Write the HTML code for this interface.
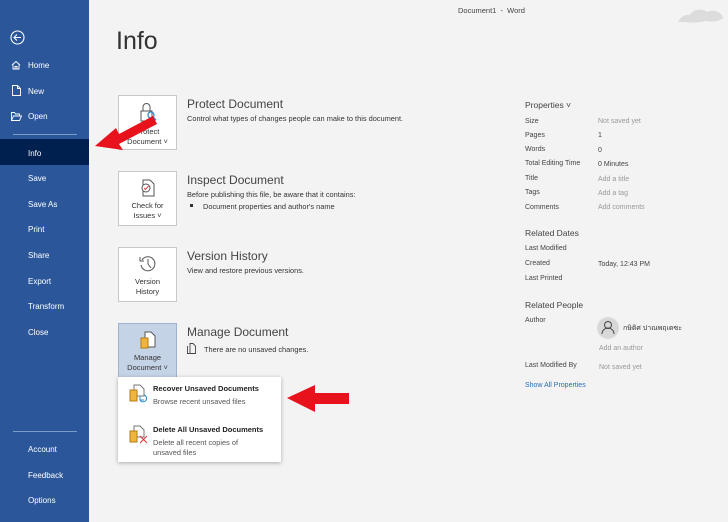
<!DOCTYPE html>
<html><head><meta charset="utf-8"><style>
*{margin:0;padding:0;box-sizing:border-box}
body{width:728px;height:522px;overflow:hidden;background:#f3f3f3;font-family:"Liberation Sans","Noto Sans CJK SC",sans-serif;position:relative;color:#333}
.a{position:absolute;white-space:nowrap}
#side{position:absolute;left:0;top:0;width:89px;height:522px;background:#2b579a;color:#fff;font-size:8px}
#side .a{color:#fff}
.btn{position:absolute;left:118px;width:59px;height:55px;background:#fff;border:1px solid #c8c8c8;font-size:7.5px;text-align:center;color:#333;line-height:10px}
.h{font-size:12px;color:#444}
.d{font-size:7.4px;color:#333}
.pl{font-size:7px;color:#444}
.pv{font-size:7px;color:#999}
</style></head><body>
<div id="side">
<svg class="a" style="left:10px;top:30px" width="15" height="15" viewBox="0 0 15 15"><circle cx="7.5" cy="7.5" r="6.5" fill="none" stroke="#fff" stroke-width="1.1"/><path d="M4 7.5h7M7 4.5l-3 3 3 3" fill="none" stroke="#fff" stroke-width="1.1"/></svg>
<svg class="a" style="left:11px;top:60px" width="10" height="10" viewBox="0 0 10 10"><path d="M1 5L5 1.5 9 5M2 4.5V9h6V4.5M4 9V6.5h2V9" fill="none" stroke="#fff" stroke-width=".9"/></svg>
<div class="a" style="left:28px;top:61px">Home</div>
<svg class="a" style="left:12px;top:85px" width="9" height="11" viewBox="0 0 9 11"><path d="M.5.5h5l3 3v7h-8zM5.5.5v3h3" fill="none" stroke="#fff" stroke-width=".9"/></svg>
<div class="a" style="left:28px;top:87px">New</div>
<svg class="a" style="left:11px;top:112px" width="11" height="9" viewBox="0 0 11 9"><path d="M.5 8.5V.5h3l1 1.5h4v2M.5 8.5l2-4.5h8l-2 4.5z" fill="none" stroke="#fff" stroke-width=".9"/></svg>
<div class="a" style="left:28px;top:112px">Open</div>
<div class="a" style="left:13px;top:134px;width:64px;height:1px;background:#7a9cc8"></div>
<div class="a" style="left:0;top:139px;width:89px;height:26px;background:#002050"></div>
<div class="a" style="left:28px;top:149px">Info</div>
<div class="a" style="left:28px;top:174px">Save</div>
<div class="a" style="left:28px;top:200px">Save As</div>
<div class="a" style="left:28px;top:225px">Print</div>
<div class="a" style="left:28px;top:251px">Share</div>
<div class="a" style="left:28px;top:277px">Export</div>
<div class="a" style="left:28px;top:302px">Transform</div>
<div class="a" style="left:28px;top:328px">Close</div>
<div class="a" style="left:13px;top:431px;width:64px;height:1px;background:#7a9cc8"></div>
<div class="a" style="left:28px;top:445px">Account</div>
<div class="a" style="left:28px;top:471px">Feedback</div>
<div class="a" style="left:28px;top:496px">Options</div>
</div>

<div class="a" style="left:458px;top:6px;font-size:7.5px;color:#444">Document1 &nbsp;-&nbsp; Word</div>
<svg class="a" style="left:676px;top:0" width="52" height="26" viewBox="0 0 52 26"><path d="M2 22c2-4 6-8 12-7 3-6 12-7 17-3 5-3 14-1 16 6-4 4-12 4-18 3-6 2-14 2-20 1z" fill="#dcdcdc"/></svg>
<div class="a" style="left:116px;top:27px;font-size:25px;color:#333;font-weight:300">Info</div>

<div class="btn" style="top:95px"><svg style="margin-top:6px" width="20" height="22" viewBox="0 0 20 22"><rect x="3" y="9" width="11" height="10" fill="none" stroke="#555"/><path d="M5 9V5a3.5 3.5 0 017 0v4" fill="none" stroke="#555"/><circle cx="13" cy="13" r="3" fill="none" stroke="#2e8fd3" stroke-width="1.3"/><path d="M15 15l3 3" stroke="#2e8fd3" stroke-width="1.3"/></svg><br>Protect<br>Document ˅</div>
<div class="a h" style="left:187px;top:97px">Protect Document</div>
<div class="a d" style="left:187px;top:114px">Control what types of changes people can make to this document.</div>

<div class="btn" style="top:171px"><svg style="margin-top:6px" width="20" height="20" viewBox="0 0 20 20"><path d="M5 2h7l4 4v12H5z" fill="#fff" stroke="#555"/><circle cx="8" cy="10" r="4" fill="#fff" stroke="#555"/><path d="M6 10l1.5 1.5L10.5 8" fill="none" stroke="#d44" /></svg><br>Check for<br>Issues ˅</div>
<div class="a h" style="left:187px;top:173px">Inspect Document</div>
<div class="a d" style="left:187px;top:190px">Before publishing this file, be aware that it contains:</div>
<div class="a" style="left:190px;top:204px;width:3px;height:3px;background:#333"></div>
<div class="a d" style="left:203px;top:202px">Document properties and author's name</div>

<div class="btn" style="top:247px"><svg style="margin-top:6px" width="20" height="20" viewBox="0 0 20 20"><path d="M4 6a7 7 0 11-1 5" fill="none" stroke="#555"/><path d="M2 3v4h4" fill="none" stroke="#555"/><path d="M10 5v5l3 4" fill="none" stroke="#555"/></svg><br>Version<br>History</div>
<div class="a h" style="left:187px;top:249px">Version History</div>
<div class="a d" style="left:187px;top:266px">View and restore previous versions.</div>

<div class="btn" style="top:323px;background:#c5d3e6;border-color:#9fb3cf"><svg style="margin-top:6px" width="20" height="20" viewBox="0 0 20 20"><path d="M7 2h6l4 4v11H7z" fill="#fff" stroke="#555"/><rect x="3" y="8" width="7" height="10" fill="#f0b33d" stroke="#b57d12"/></svg><br>Manage<br>Document ˅</div>
<div class="a h" style="left:187px;top:325px">Manage Document</div>
<svg class="a" style="left:187px;top:343px" width="9" height="11" viewBox="0 0 9 11"><path d="M3 .5h3l2.5 2.5v7.5h-5.5zM.5 3v7.5h2" fill="none" stroke="#444" stroke-width=".9"/></svg>
<div class="a d" style="left:204px;top:345px">There are no unsaved changes.</div>

<div class="a" style="left:118px;top:377px;width:163px;height:85px;background:#fff;box-shadow:0 1px 4px rgba(0,0,0,.3)"></div>
<svg class="a" style="left:128px;top:384px" width="20" height="20" viewBox="0 0 20 20"><path d="M6 1h6l4 4v7H6z" fill="#fff" stroke="#777"/><rect x="2" y="6" width="7" height="11" fill="#f0b33d" stroke="#b57d12"/><path d="M12 16a3.5 3.5 0 104-5M12 12v4h4" fill="none" stroke="#2e8fd3"/></svg>
<div class="a" style="left:153px;top:384px;font-size:7.5px;font-weight:bold;color:#222">Recover Unsaved Documents</div>
<div class="a d" style="left:153px;top:397px;color:#555">Browse recent unsaved files</div>
<svg class="a" style="left:128px;top:425px" width="22" height="20" viewBox="0 0 22 20"><path d="M6 1h6l4 4v7H6z" fill="#fff" stroke="#777"/><rect x="2" y="6" width="7" height="11" fill="#f0b33d" stroke="#b57d12"/><path d="M12 11l7 7M19 11l-7 7" stroke="#d33"/></svg>
<div class="a" style="left:153px;top:425px;font-size:7.5px;font-weight:bold;color:#222">Delete All Unsaved Documents</div>
<div class="a d" style="left:153px;top:438px;color:#555">Delete all recent copies of</div>
<div class="a d" style="left:153px;top:448px;color:#555">unsaved files</div>

<svg class="a" style="left:95px;top:112px" width="62" height="40" viewBox="0 0 62 40"><path d="M58 4L24 22l-3-6L0 34l28 4-4-6 38-20z" fill="#e8121d"/></svg>
<svg class="a" style="left:287px;top:385px" width="64" height="27" viewBox="0 0 64 27"><path d="M0 13L28 0v8h34v11H28v8z" fill="#e8121d"/></svg>

<div class="a" style="left:525px;top:100px;font-size:8.5px;color:#444">Properties ˅</div>
<div class="a pl" style="left:525px;top:118px">Size</div><div class="a pv" style="left:598px;top:118px">Not saved yet</div>
<div class="a pl" style="left:525px;top:132px">Pages</div><div class="a pl" style="left:598px;top:132px">1</div>
<div class="a pl" style="left:525px;top:146px">Words</div><div class="a pl" style="left:598px;top:147px">0</div>
<div class="a pl" style="left:525px;top:160px">Total Editing Time</div><div class="a pl" style="left:598px;top:161px">0 Minutes</div>
<div class="a pl" style="left:525px;top:175px">Title</div><div class="a pv" style="left:598px;top:176px">Add a title</div>
<div class="a pl" style="left:525px;top:189px">Tags</div><div class="a pv" style="left:598px;top:190px">Add a tag</div>
<div class="a pl" style="left:525px;top:204px">Comments</div><div class="a pv" style="left:598px;top:204px">Add comments</div>
<div class="a" style="left:525px;top:228px;font-size:8.5px;color:#444">Related Dates</div>
<div class="a pl" style="left:525px;top:245px">Last Modified</div>
<div class="a pl" style="left:525px;top:260px">Created</div><div class="a pl" style="left:598px;top:261px">Today, 12:43 PM</div>
<div class="a pl" style="left:525px;top:275px">Last Printed</div>
<div class="a" style="left:525px;top:300px;font-size:8.5px;color:#444">Related People</div>
<div class="a pl" style="left:525px;top:317px">Author</div>
<div class="a" style="left:597px;top:317px;width:22px;height:22px;border-radius:50%;background:#d8d8d8"></div>
<svg class="a" style="left:601px;top:320px" width="14" height="15" viewBox="0 0 14 15"><circle cx="7" cy="5" r="3.5" fill="none" stroke="#444"/><path d="M1 14a6 6 0 0112 0" fill="none" stroke="#444"/></svg>
<div class="a" style="left:623px;top:323px;font-size:7px;color:#333">กษิติศ ปาณพฤเตซะ</div>
<div class="a pv" style="left:599px;top:345px">Add an author</div>
<div class="a pl" style="left:525px;top:362px">Last Modified By</div><div class="a pv" style="left:599px;top:364px">Not saved yet</div>
<div class="a" style="left:525px;top:382px;font-size:7px;color:#2b6cb0">Show All Properties</div>
</body></html>
